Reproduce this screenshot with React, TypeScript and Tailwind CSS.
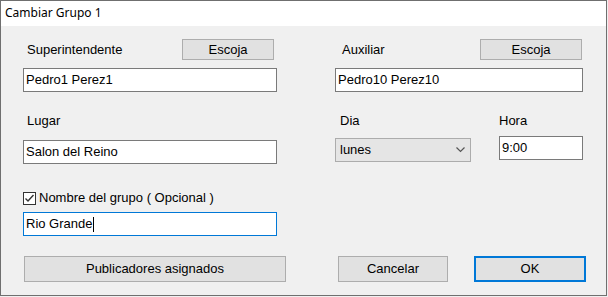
import React from "react";

const body = { fontFamily: '"Liberation Sans", Arial, sans-serif' };

function Button({ label, className }: { label: string; className: string }) {
  return (
    <div
      className={`flex items-center justify-center bg-[#e1e1e1] text-[13px] text-black ${className}`}
    >
      {label}
    </div>
  );
}

function TextBox({ value, className, focused }: { value: string; className: string; focused?: boolean }) {
  return (
    <div
      className={`flex h-[24px] items-center bg-white pl-[2px] text-[13px] text-black ${
        focused ? "border border-[#0078d7]" : "border border-[#7a7a7a]"
      } ${className}`}
    >
      <span>{value}</span>
      {focused && <span className="ml-[1px] h-[15px] w-[1px] bg-black" />}
    </div>
  );
}

export default function App() {
  return (
    <div className="h-[297px] w-[608px] bg-[#f0f0f0]" style={body}>
      <div className="flex h-[296px] w-[607px] flex-col border border-[#6f6f6f] bg-[#f0f0f0]">
        {/* Title bar */}
        <div
          className="flex h-[25px] items-center bg-white pl-[4px] pb-[1px] text-[12px] text-black"
          style={{ fontFamily: '"Noto Sans", "Open Sans", sans-serif' }}
        >
          Cambiar Grupo 1
        </div>

        {/* Columns */}
        <div className="flex pl-[22px] pt-[13px]">
          {/* Left column */}
          <div className="flex w-[254px] flex-col">
            <div className="flex h-[21px] items-center">
              <span className="flex-1 pl-[4px] text-[13px]">Superintendente</span>
              <Button label="Escoja" className="mr-[3px] h-[21px] w-[92px] border border-[#adadad]" />
            </div>
            <TextBox value="Pedro1 Perez1" className="mt-[8px] w-[254px]" />

            <div className="mt-[19px] flex h-[20px] items-center pl-[4px] text-[13px]">Lugar</div>
            <TextBox value="Salon del Reino" className="mt-[9px] w-[254px]" />

            <div className="mt-[25px] flex h-[18px] items-center text-[13px]">
              <div className="flex h-[13px] w-[13px] items-center justify-center border border-[#333] bg-white">
                <svg width="11" height="11" viewBox="0 0 11 11">
                  <polyline points="1.5,5.5 4,8 9.5,2" fill="none" stroke="#333" strokeWidth="1.4" />
                </svg>
              </div>
              <span className="ml-[3px]">Nombre del grupo ( Opcional )</span>
            </div>
            <TextBox value="Rio Grande" focused className="mt-[5px] w-[254px]" />
          </div>

          {/* Right column */}
          <div className="ml-[58px] flex w-[248px] flex-col">
            <div className="flex h-[21px] items-center">
              <span className="flex-1 pl-[7px] text-[13px]">Auxiliar</span>
              <Button label="Escoja" className="mr-[1px] h-[21px] w-[102px] border border-[#adadad]" />
            </div>
            <TextBox value="Pedro10 Perez10" className="mt-[8px] w-[248px]" />

            <div className="mt-[19px] flex">
              <div className="flex w-[136px] flex-col">
                <div className="flex h-[20px] items-center pl-[5px] text-[13px]">Dia</div>
                <div className="mt-[7px] flex h-[24px] items-center justify-between border border-[#acacac] bg-[#e5e5e5] pl-[4px] pr-[5px] text-[13px]">
                  <span>lunes</span>
                  <svg width="9" height="6" viewBox="0 0 9 6">
                    <polyline points="0.5,0.5 4.5,4.5 8.5,0.5" fill="none" stroke="#555" strokeWidth="1.2" />
                  </svg>
                </div>
              </div>
              <div className="ml-[28px] flex w-[84px] flex-col">
                <div className="flex h-[20px] items-center text-[13px]">Hora</div>
                <TextBox value="9:00" className="mt-[5px] w-[84px]" />
              </div>
            </div>
          </div>
        </div>

        {/* Bottom buttons */}
        <div className="mt-[20px] flex pl-[23px]">
          <Button label="Publicadores asignados" className="h-[26px] w-[262px] border border-[#adadad]" />
          <Button label="Cancelar" className="ml-[52px] h-[26px] w-[110px] border border-[#adadad]" />
          <Button label="OK" className="ml-[26px] h-[26px] w-[112px] border-2 border-[#0078d7]" />
        </div>
      </div>
    </div>
  );
}
